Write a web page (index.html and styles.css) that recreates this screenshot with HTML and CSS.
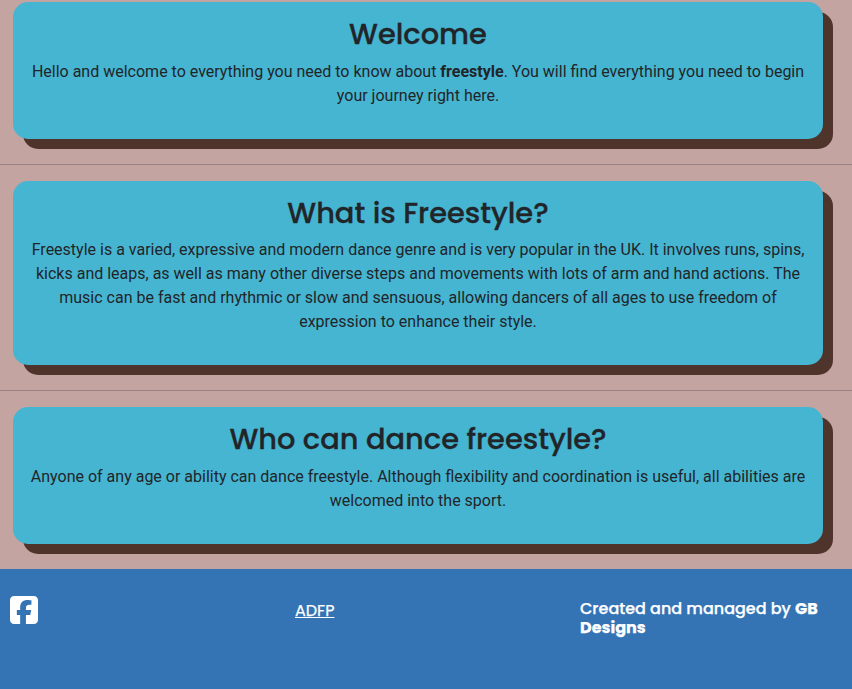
FILE: index.html
```html
<!DOCTYPE html>
<html lang="en">
<head>
<meta charset="utf-8">
<title>Freestyle</title>
<link rel="stylesheet" href="styles.css">
</head>
<body>
<main>
<section class="card"><h2>Welcome</h2><p>Hello and welcome to everything you need to know about <strong>freestyle</strong>. You will find everything you need to begin your journey right here.</p></section>
<hr>
<section class="card"><h2>What is Freestyle?</h2><p>Freestyle is a varied, expressive and modern dance genre and is very popular in the UK. It involves runs, spins, kicks and leaps, as well as many other diverse steps and movements with lots of arm and hand actions. The music can be fast and rhythmic or slow and sensuous, allowing dancers of all ages to use freedom of expression to enhance their style.</p></section>
<hr>
<section class="card"><h2>Who can dance freestyle?</h2><p>Anyone of any age or ability can dance freestyle. Although flexibility and coordination is useful, all abilities are welcomed into the sport.</p></section>
</main>
<footer>
<div class="social"><svg viewBox="0 0 448 512" width="28" height="32" fill="currentColor"><path d="M64 32C28.700 32 0 60.700 0 96v320c0 35.300 28.700 64 64 64h98.200V334.200h-52.800V256h52.800v-33.700c0-87.100 39.400-127.500 125-127.500 16.200 0 44.200 3.200 55.700 6.400V172c-6-.6-16.500-1-29.600-1-42 0-58.200 15.900-58.200 57.200V256h83.600l-14.400 78.200H255V480h129c35.300 0 64-28.700 64-64V96c0-35.300-28.700-64-64-64z"/></svg></div>
<div class="link"><a href="#">ADFP</a></div>
<div class="credit">Created and managed by <strong>GB Designs</strong></div>
</footer>
</body>
</html>
```
FILE: styles.css
```css
* { box-sizing: border-box; }
body { margin: 0; background: #c3a4a1; color: #212529; font: 16px/24px Roboto, sans-serif; }
main { height: 569px; padding-top: 2px; }
.card { width: 810px; margin-left: 13px; padding: 15px 15px 0; border-radius: 15px; background: #46b5d1; box-shadow: 10px 10px #4f342c; text-align: center; }
h2 { margin: 0 0 8px; font: 500 calc(1.325rem + .9vw)/1.2 Poppins, Lato, sans-serif; -webkit-text-stroke: .3px currentColor; }
p { margin: 0; padding-bottom: 31px; }
hr { height: 1px; margin: 25px 0 16px; border: 0; background: #9a8284; }
footer { display: grid; grid-template-columns: 285px 285px 1fr; height: 120px; padding: 25px 10px; background: #3474b5; color: #fff; font: 500 16px/19px Poppins, Lato, sans-serif; }
.social svg { display: block; }
.link { padding-top: 7px; font-weight: 400; }
a { color: inherit; }
.credit { padding-top: 5px; }
.link, .credit { -webkit-text-stroke: .25px currentColor; }
```
